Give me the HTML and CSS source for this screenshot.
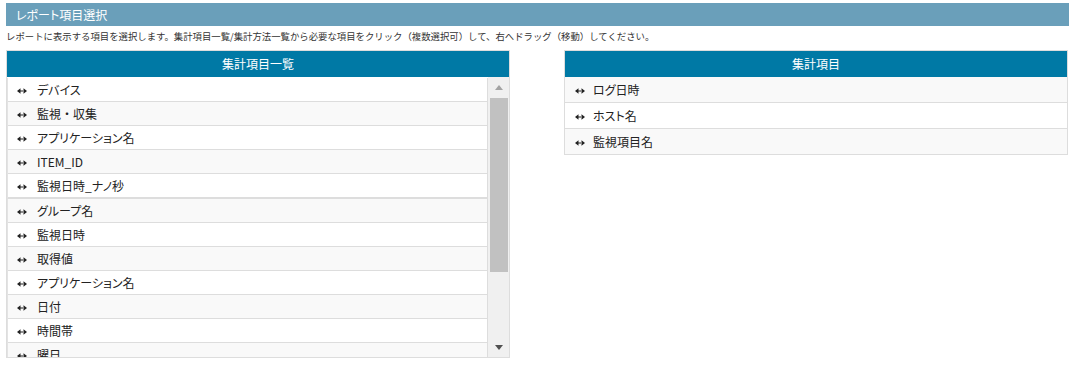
FILE: index.html
```html
<!DOCTYPE html>
<html lang="ja">

<head>
    <meta charset="UTF-8">
    <meta name="viewport" content="width=device-width, initial-scale=1.0">
    <title>レポート項目選択</title>
    <link rel="stylesheet" href="styles.css">
</head>

<body>
    <div class="page">
        <h1 class="title">レポート項目選択</h1>
        <p class="note">レポートに表示する項目を選択します。集計項目一覧/集計方法一覧から必要な項目をクリック（複数選択可）して、右へドラッグ（移動）してください。</p>
        <div class="columns">
            <section class="panel panel-source">
                <div class="panel-head">集計項目一覧</div>
                <div class="panel-body">
                    <div class="viewport">
                        <ul class="item-list first-group">
                            <li><svg class="arrow" width="10" height="6" viewBox="0 0 10 6"><path d="M0 3L3.5 0.3V5.7ZM10 3L6.5 0.3V5.7ZM3 2.4H7V3.6H3Z" fill="#222"/></svg>デバイス</li>
                            <li><svg class="arrow" width="10" height="6" viewBox="0 0 10 6"><path d="M0 3L3.5 0.3V5.7ZM10 3L6.5 0.3V5.7ZM3 2.4H7V3.6H3Z" fill="#222"/></svg>監視<span class="wide">・</span>収集</li>
                            <li><svg class="arrow" width="10" height="6" viewBox="0 0 10 6"><path d="M0 3L3.5 0.3V5.7ZM10 3L6.5 0.3V5.7ZM3 2.4H7V3.6H3Z" fill="#222"/></svg>アプリケーション名</li>
                            <li><svg class="arrow" width="10" height="6" viewBox="0 0 10 6"><path d="M0 3L3.5 0.3V5.7ZM10 3L6.5 0.3V5.7ZM3 2.4H7V3.6H3Z" fill="#222"/></svg>ITEM_ID</li>
                            <li><svg class="arrow" width="10" height="6" viewBox="0 0 10 6"><path d="M0 3L3.5 0.3V5.7ZM10 3L6.5 0.3V5.7ZM3 2.4H7V3.6H3Z" fill="#222"/></svg>監視日時_ナノ秒</li>
                        </ul>
                        <ul class="item-list second-group">
                            <li><svg class="arrow" width="10" height="6" viewBox="0 0 10 6"><path d="M0 3L3.5 0.3V5.7ZM10 3L6.5 0.3V5.7ZM3 2.4H7V3.6H3Z" fill="#222"/></svg>グループ名</li>
                            <li><svg class="arrow" width="10" height="6" viewBox="0 0 10 6"><path d="M0 3L3.5 0.3V5.7ZM10 3L6.5 0.3V5.7ZM3 2.4H7V3.6H3Z" fill="#222"/></svg>監視日時</li>
                            <li><svg class="arrow" width="10" height="6" viewBox="0 0 10 6"><path d="M0 3L3.5 0.3V5.7ZM10 3L6.5 0.3V5.7ZM3 2.4H7V3.6H3Z" fill="#222"/></svg>取得値</li>
                            <li><svg class="arrow" width="10" height="6" viewBox="0 0 10 6"><path d="M0 3L3.5 0.3V5.7ZM10 3L6.5 0.3V5.7ZM3 2.4H7V3.6H3Z" fill="#222"/></svg>アプリケーション名</li>
                            <li><svg class="arrow" width="10" height="6" viewBox="0 0 10 6"><path d="M0 3L3.5 0.3V5.7ZM10 3L6.5 0.3V5.7ZM3 2.4H7V3.6H3Z" fill="#222"/></svg>日付</li>
                            <li><svg class="arrow" width="10" height="6" viewBox="0 0 10 6"><path d="M0 3L3.5 0.3V5.7ZM10 3L6.5 0.3V5.7ZM3 2.4H7V3.6H3Z" fill="#222"/></svg>時間帯</li>
                            <li><svg class="arrow" width="10" height="6" viewBox="0 0 10 6"><path d="M0 3L3.5 0.3V5.7ZM10 3L6.5 0.3V5.7ZM3 2.4H7V3.6H3Z" fill="#222"/></svg>曜日</li>
                        </ul>
                    </div>
                    <div class="scrollbar">
                        <div class="sb-btn"><span class="tri-up"></span></div>
                        <div class="sb-track">
                            <div class="sb-thumb"></div>
                        </div>
                        <div class="sb-btn"><span class="tri-down"></span></div>
                    </div>
                </div>
            </section>
            <section class="panel panel-target">
                <div class="panel-head">集計項目</div>
                <ul class="item-list selected">
                    <li><svg class="arrow" width="10" height="6" viewBox="0 0 10 6"><path d="M0 3L3.5 0.3V5.7ZM10 3L6.5 0.3V5.7ZM3 2.4H7V3.6H3Z" fill="#222"/></svg>ログ日時</li>
                    <li><svg class="arrow" width="10" height="6" viewBox="0 0 10 6"><path d="M0 3L3.5 0.3V5.7ZM10 3L6.5 0.3V5.7ZM3 2.4H7V3.6H3Z" fill="#222"/></svg>ホスト名</li>
                    <li><svg class="arrow" width="10" height="6" viewBox="0 0 10 6"><path d="M0 3L3.5 0.3V5.7ZM10 3L6.5 0.3V5.7ZM3 2.4H7V3.6H3Z" fill="#222"/></svg>監視項目名</li>
                </ul>
            </section>
        </div>
    </div>
</body>

</html>
```

FILE: styles.css
```css
* {
    margin: 0;
    padding: 0;
    box-sizing: border-box;
}

body {
    font-family: "Noto Sans CJK JP", "Noto Sans", sans-serif;
    color: #222;
    background-color: #fff;
}

.page {
    padding: 3px 0 0 6px;
}

.title {
    height: 23px;
    line-height: 23px;
    padding-left: 10px;
    background-color: rgb(106, 159, 186);
    color: #fff;
    font-size: 12px;
    font-weight: normal;
    font-feature-settings: "palt";
}

.note {
    height: 24px;
    line-height: 20px;
    font-size: 9.4px;
    color: #333;
}

.columns {
    display: flex;
    justify-content: space-between;
    align-items: flex-start;
    width: 1062px;
}

.panel {
    width: 504px;
    border: 1px solid #ddd;
}

.panel-head {
    height: 26px;
    line-height: 25px;
    background-color: rgb(0, 121, 165);
    color: #fff;
    text-align: center;
    font-size: 12px;
}

.panel-body {
    display: flex;
    height: 280px;
}

.viewport {
    flex: 1;
    padding-top: 1px;
    overflow: hidden;
}

.item-list {
    list-style: none;
    font-size: 12px;
    font-feature-settings: "palt";
}

.item-list li {
    height: 24px;
    line-height: 23px;
    padding-left: 9px;
    border-bottom: 1px solid #ddd;
    background-color: #fff;
    white-space: nowrap;
}

.panel-source .item-list {
    border-left: 1px solid #e3e3e3;
    border-right: 1px solid #ddd;
}

.first-group li:nth-child(even),
.second-group li:nth-child(odd),
.selected li:nth-child(odd) {
    background-color: #f9f9f9;
}

.second-group {
    border-top: 1px solid #ddd;
}

.selected li {
    height: 26px;
    line-height: 25px;
    padding-left: 10px;
}

.selected li:last-child {
    height: 25px;
    border-bottom: none;
}

.wide {
    font-feature-settings: normal;
}

.arrow {
    vertical-align: middle;
    margin: -2px 10px 0 0;
}

.panel-target .arrow {
    margin-right: 8px;
}

/* scrollbar */
.scrollbar {
    display: flex;
    flex-direction: column;
    width: 21px;
    background-color: #f0f0f0;
}

.sb-btn {
    display: flex;
    justify-content: center;
    align-items: center;
    height: 20px;
    padding-left: 1px;
}

.tri-up {
    border-left: 4.5px solid transparent;
    border-right: 4.5px solid transparent;
    border-bottom: 5px solid #a3a3a3;
}

.tri-down {
    border-left: 4.5px solid transparent;
    border-right: 4.5px solid transparent;
    border-top: 5px solid #505050;
}

.sb-track {
    flex: 1;
    padding: 1px 1px 0 2px;
}

.sb-thumb {
    height: 174px;
    background-color: #c1c1c1;
}
```
